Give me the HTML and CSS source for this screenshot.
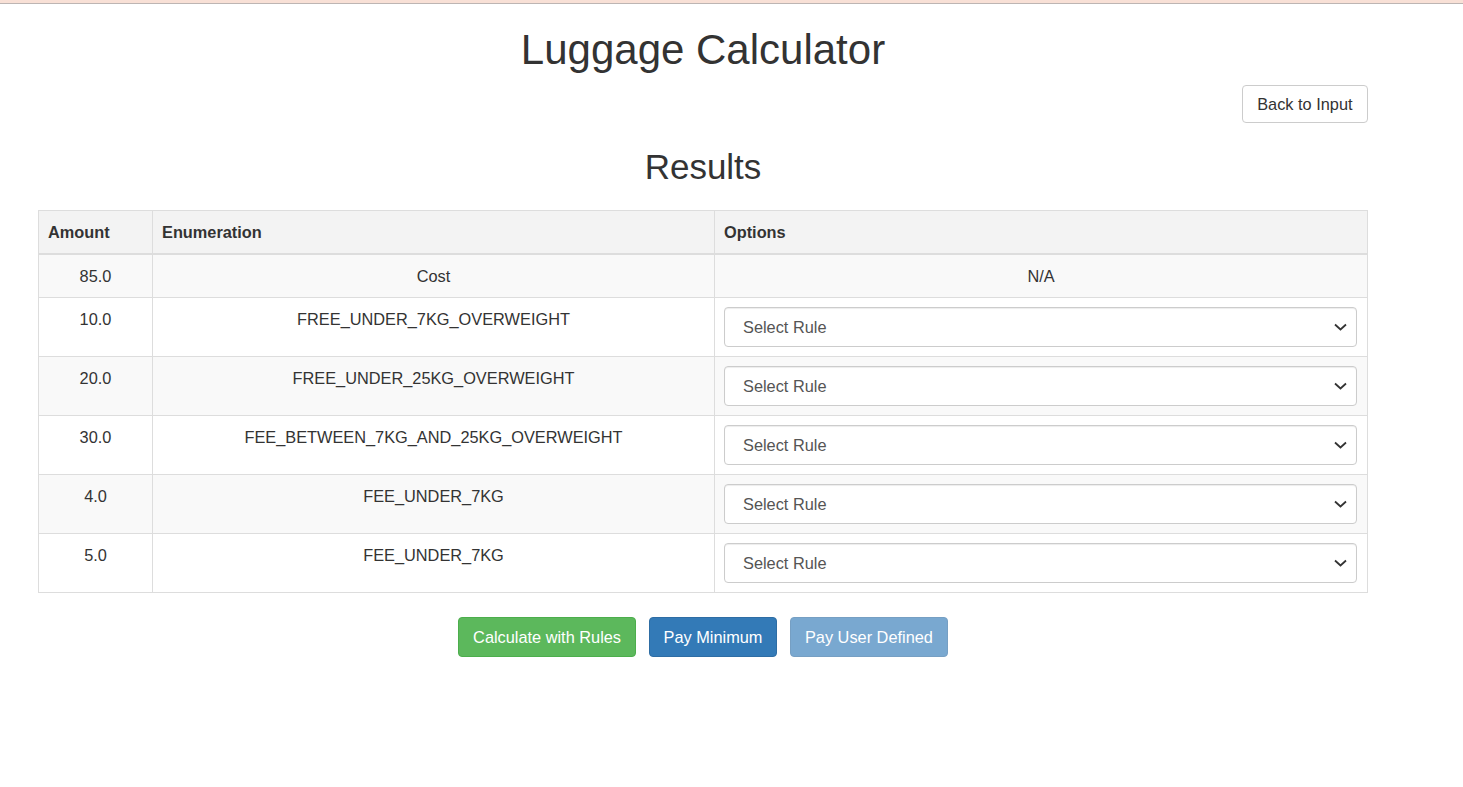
FILE: index.html
```html
<!DOCTYPE html>
<html lang="en">
<head>
<meta charset="utf-8">
<title>Luggage Calculator</title>
<link rel="stylesheet" href="styles.css">
</head>
<body>
<div class="topbar"></div>
<div class="container">
  <h1 class="title">Luggage Calculator</h1>
  <div class="back-row">
    <button class="btn btn-default" type="button">Back to Input</button>
  </div>
  <h2 class="subtitle">Results</h2>
  <table class="results">
    <colgroup>
      <col class="col-amount">
      <col class="col-enum">
      <col class="col-options">
    </colgroup>
    <thead>
      <tr><th>Amount</th><th>Enumeration</th><th>Options</th></tr>
    </thead>
    <tbody>
      <tr><td>85.0</td><td>Cost</td><td>N/A</td></tr>
      <tr><td>10.0</td><td>FREE_UNDER_7KG_OVERWEIGHT</td><td class="opt"><div class="select-wrap"><select class="form-control"><option>Select Rule</option></select><svg class="chev" width="13" height="8" viewBox="0 0 13 8"><path d="M1 1.5 L6.5 6.5 L12 1.5" fill="none" stroke="#333" stroke-width="1.8"/></svg></div></td></tr>
      <tr><td>20.0</td><td>FREE_UNDER_25KG_OVERWEIGHT</td><td class="opt"><div class="select-wrap"><select class="form-control"><option>Select Rule</option></select><svg class="chev" width="13" height="8" viewBox="0 0 13 8"><path d="M1 1.5 L6.5 6.5 L12 1.5" fill="none" stroke="#333" stroke-width="1.8"/></svg></div></td></tr>
      <tr><td>30.0</td><td>FEE_BETWEEN_7KG_AND_25KG_OVERWEIGHT</td><td class="opt"><div class="select-wrap"><select class="form-control"><option>Select Rule</option></select><svg class="chev" width="13" height="8" viewBox="0 0 13 8"><path d="M1 1.5 L6.5 6.5 L12 1.5" fill="none" stroke="#333" stroke-width="1.8"/></svg></div></td></tr>
      <tr><td>4.0</td><td>FEE_UNDER_7KG</td><td class="opt"><div class="select-wrap"><select class="form-control"><option>Select Rule</option></select><svg class="chev" width="13" height="8" viewBox="0 0 13 8"><path d="M1 1.5 L6.5 6.5 L12 1.5" fill="none" stroke="#333" stroke-width="1.8"/></svg></div></td></tr>
      <tr><td>5.0</td><td>FEE_UNDER_7KG</td><td class="opt"><div class="select-wrap"><select class="form-control"><option>Select Rule</option></select><svg class="chev" width="13" height="8" viewBox="0 0 13 8"><path d="M1 1.5 L6.5 6.5 L12 1.5" fill="none" stroke="#333" stroke-width="1.8"/></svg></div></td></tr>
    </tbody>
  </table>
  <div class="actions">
    <button class="btn btn-success" type="button">Calculate with Rules</button>
    <button class="btn btn-primary" type="button">Pay Minimum</button>
    <button class="btn btn-primary btn-disabled" type="button">Pay User Defined</button>
  </div>
</div>
</body>
</html>
```

FILE: styles.css
```css
* { box-sizing: border-box; }

html, body {
  margin: 0;
  padding: 0;
  background: #fff;
}

body {
  font-family: "Liberation Sans", Arial, Helvetica, sans-serif;
  font-size: 16.33px;
  line-height: 24px;
  color: #333;
}

.topbar {
  height: 4px;
  background: #f8e0d6;
  border-bottom: 1px solid #bdb5b3;
}

.container {
  width: 1330px;
  margin-left: 38px;
}

.title {
  margin: 23px 0 12px;
  font-size: 42px;
  line-height: 46px;
  font-weight: 500;
  text-align: center;
  color: #333;
}

.back-row {
  display: flex;
  justify-content: flex-end;
}

.subtitle {
  margin: 25px 0 24px;
  font-size: 35px;
  line-height: 38px;
  font-weight: 500;
  text-align: center;
  color: #333;
}

.btn {
  font-family: inherit;
  font-size: 16.33px;
  line-height: 22px;
  padding: 8px 14px;
  border: 1px solid transparent;
  border-radius: 4px;
  cursor: pointer;
  white-space: nowrap;
}

.back-row .btn {
  padding: 7px 14.5px;
}

.btn-default {
  background: #fff;
  border-color: #ccc;
  color: #333;
}

.btn-success {
  background: #5cb85c;
  border-color: #4cae4c;
  color: #fff;
}

.btn-primary {
  background: #337ab7;
  border-color: #2e6da4;
  color: #fff;
}

.btn-disabled {
  opacity: 0.65;
  cursor: not-allowed;
}

.results {
  width: 1329px;
  border-collapse: collapse;
  table-layout: fixed;
  border: 1px solid #ddd;
}

.col-amount { width: 114px; }
.col-enum { width: 562px; }
.col-options { width: 653px; }

.results th,
.results td {
  border: 1px solid #ddd;
  padding: 9px;
  vertical-align: top;
}

.results th {
  background: #f3f3f3;
  text-align: left;
  font-weight: bold;
  border-bottom: 2px solid #ddd;
}

.results td {
  text-align: center;
}

.results tbody tr:nth-child(odd) td {
  background: #f9f9f9;
}

.results td.opt {
  text-align: left;
  padding-right: 10px;
}

.select-wrap {
  position: relative;
}

.form-control {
  display: block;
  width: 100%;
  height: 40px;
  padding: 0 36px 0 18px;
  font-family: inherit;
  font-size: 16.33px;
  color: #555;
  background: #fff;
  border: 1px solid #ccc;
  border-radius: 4px;
  box-shadow: inset 0 1px 1px rgba(0,0,0,0.075);
  -webkit-appearance: none;
  appearance: none;
}

.chev {
  position: absolute;
  right: 10px;
  top: 16px;
  pointer-events: none;
}

.actions {
  display: flex;
  justify-content: center;
  gap: 12.5px;
  margin-top: 24px;
}
```
